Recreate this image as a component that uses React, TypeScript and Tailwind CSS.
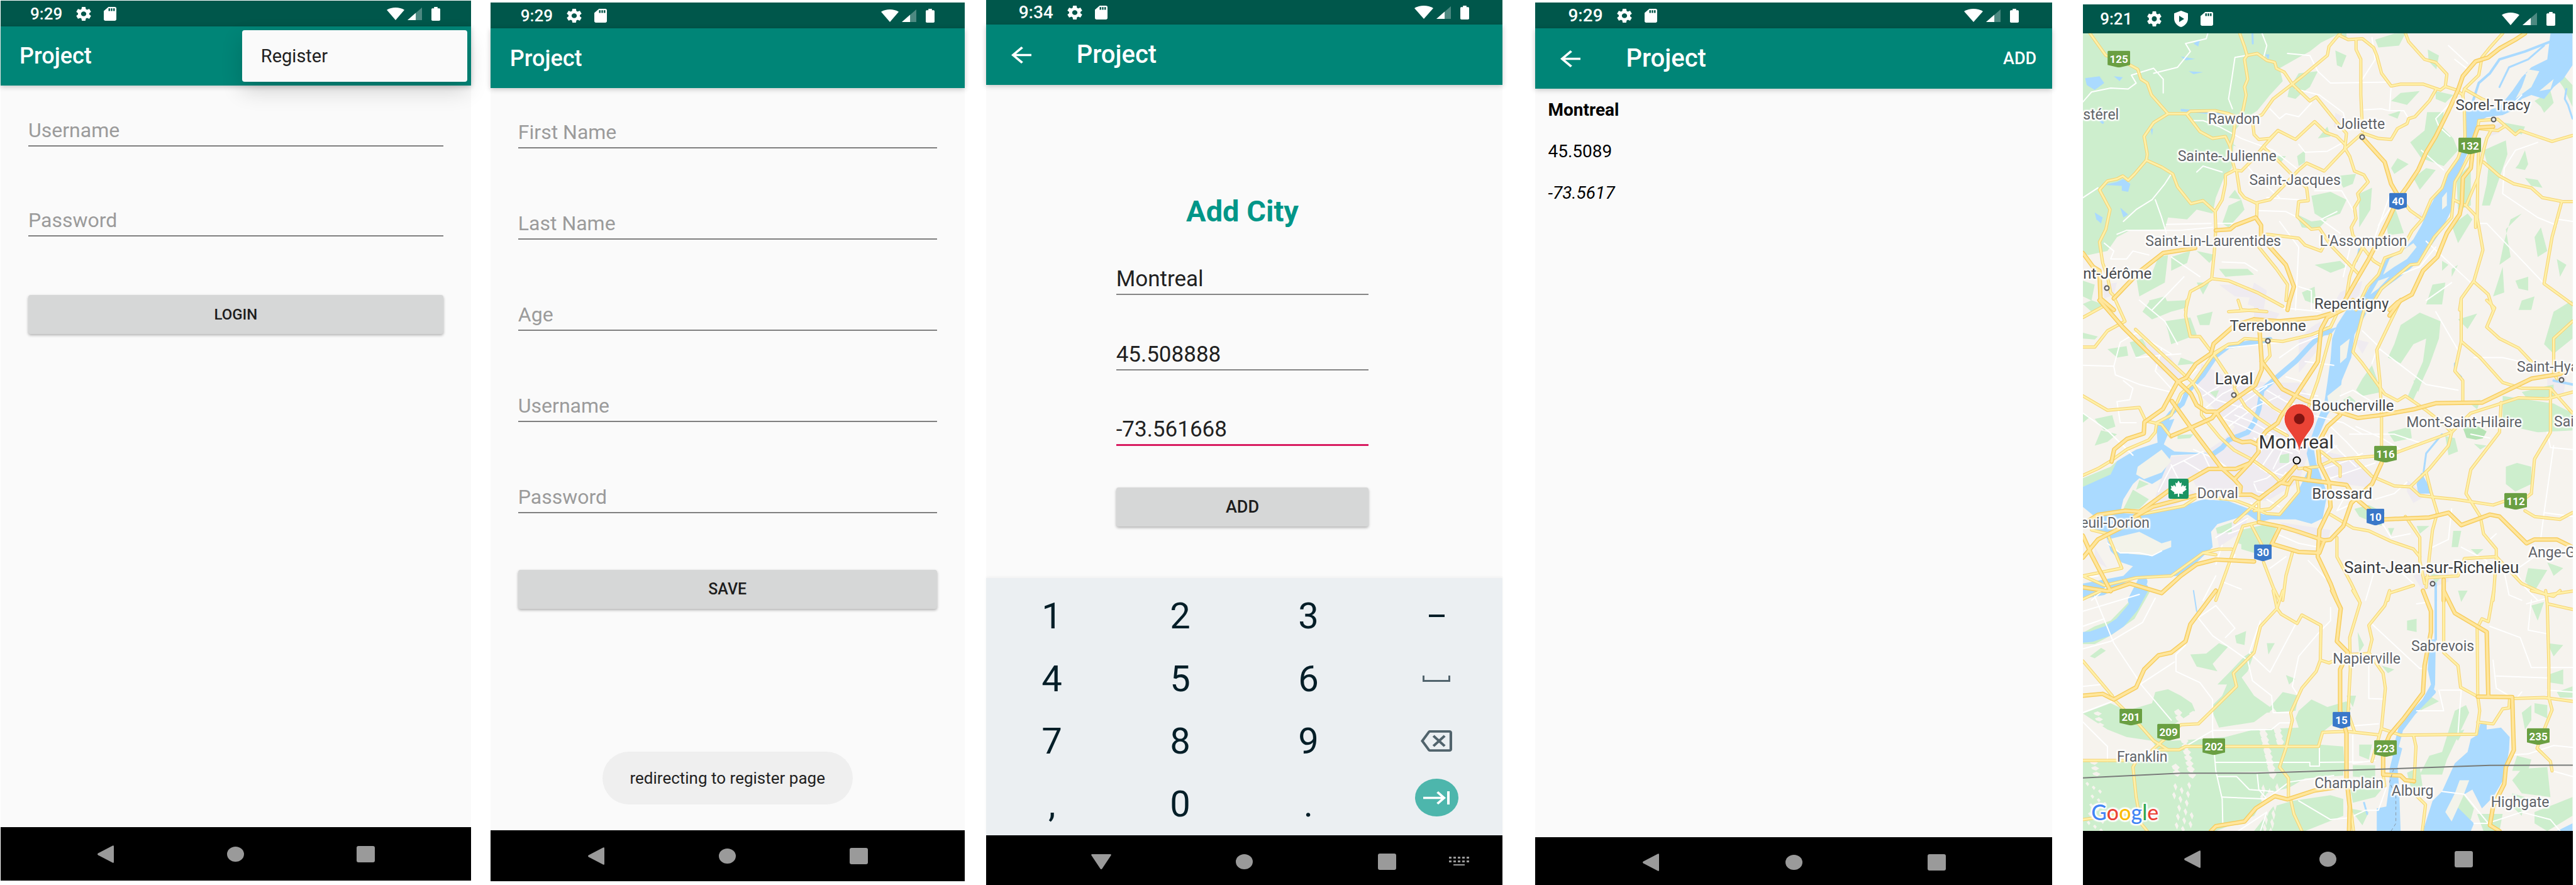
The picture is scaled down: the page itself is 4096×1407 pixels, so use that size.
import type { ReactNode } from "react";

/* ---------- icons ---------- */

type IconProps = { box: string; className: string; children: ReactNode };

function Icon({ box, className, children }: IconProps) {
  return (
    <svg viewBox={box} preserveAspectRatio="none" fill="currentColor" aria-hidden="true" className={className}>
      {children}
    </svg>
  );
}

function Gear({ className }: { className: string }) {
  return (
    <Icon box="2 2 20 20" className={className}>
      <path d="M19.43 12.98c.04-.32.07-.64.07-.98s-.03-.66-.07-.98l2.11-1.65c.19-.15.24-.42.12-.64l-2-3.46c-.12-.22-.39-.3-.61-.22l-2.49 1c-.52-.4-1.08-.73-1.69-.98l-.38-2.65C14.46 2.18 14.25 2 14 2h-4c-.25 0-.46.18-.49.42l-.38 2.65c-.61.25-1.17.59-1.69.98l-2.49-1c-.23-.09-.49 0-.61.22l-2 3.46c-.13.22-.07.49.12.64l2.11 1.65c-.04.32-.07.65-.07.98s.03.66.07.98l-2.11 1.65c-.19.15-.24.42-.12.64l2 3.46c.12.22.39.3.61.22l2.49-1c.52.4 1.08.73 1.69.98l.38 2.65c.03.24.24.42.49.42h4c.25 0 .46-.18.49-.42l.38-2.65c.61-.25 1.17-.59 1.69-.98l2.49 1c.23.09.49 0 .61-.22l2-3.46c.12-.22.07-.49-.12-.64l-2.11-1.65zM12 15.5c-1.93 0-3.5-1.57-3.5-3.5s1.57-3.5 3.5-3.5 3.5 1.57 3.5 3.5-1.57 3.5-3.5 3.5z" />
    </Icon>
  );
}

function SdCard({ className }: { className: string }) {
  return (
    <Icon box="4 2 16 20" className={className}>
      <path d="M18 2h-8L4.02 8 4 20c0 1.1.9 2 2 2h12c1.1 0 2-.9 2-2V4c0-1.1-.9-2-2-2zm-6 6h-2V4h2v4zm3 0h-2V4h2v4zm3 0h-2V4h2v4z" />
    </Icon>
  );
}

function PlayShield() {
  return (
    <Icon box="0 0 22 26" className="h-[26px] w-[22px]">
      <path
        fillRule="evenodd"
        d="M11 0 0 4.200v8c0 6.500 4.500 11.800 11 13.800 6.500-2 11-7.300 11-13.800v-8zM8 8l8 5-8 5z"
      />
    </Icon>
  );
}

function Wifi({ className }: { className: string }) {
  return (
    <Icon box="0 0 28 20" className={className}>
      <path d="M14 20 0 3.800C4 1.200 9 0 14 0s10 1.200 14 3.800z" />
    </Icon>
  );
}

function Signal({ className }: { className: string }) {
  return (
    <Icon box="0 0 22 20" className={className}>
      <path d="M22 0v20H0z" opacity="0.3" />
      <path d="M12.500 8.600V20H0z" />
    </Icon>
  );
}

function Battery({ className }: { className: string }) {
  return (
    <Icon box="7 2 10 20" className={className}>
      <path d="M15.67 4H14V2h-4v2H8.33C7.6 4 7 4.6 7 5.33v15.33C7 21.4 7.6 22 8.33 22h7.33c.74 0 1.34-.6 1.34-1.33V5.33C17 4.6 16.4 4 15.67 4z" />
    </Icon>
  );
}

/* ---------- shared phone parts ---------- */

type StatusProps = { time: string; large?: boolean; tight?: boolean; className: string };

function StatusBar({ time, large, tight, className }: StatusProps) {
  return (
    <div className={`flex shrink-0 items-center bg-[#00574b] font-medium text-white ${className}`}>
      <span className={large ? "text-[28px] leading-none" : "text-[26px] leading-none"}>{time}</span>
      <Gear className={tight ? "ml-6 h-6 w-[23px]" : "ml-[22px] h-[22px] w-6"} />
      {tight && (
        <span className="ml-5">
          <PlayShield />
        </span>
      )}
      <SdCard className="ml-5 h-[22px] w-5" />
      <Wifi className={large ? "ml-auto h-[21px] w-[30px]" : "ml-auto h-5 w-7"} />
      <Signal className="ml-[5px] h-5 w-[23px]" />
      <Battery className="ml-[15px] h-[22px] w-[14px]" />
    </div>
  );
}

function NavBar({ down, className, children }: { down?: boolean; className: string; children?: ReactNode }) {
  return (
    <nav className={`relative shrink-0 bg-black text-[#9a9a9a] ${className}`}>
      <div className="mx-auto grid h-full w-[83%] grid-cols-3 place-items-center">
        <button type="button" aria-label={down ? "Hide keyboard" : "Back"}>
          {down ? (
            <Icon box="0 0 32 24" className="h-6 w-8">
              <path d="M1.500 0h29q2 0 1 2L17.500 23q-1.500 2-3 0L.5 2q-1-2 1-2z" />
            </Icon>
          ) : (
            <Icon box="0 0 26 28" className="h-7 w-[26px]">
              <path d="M26 1.500v25q0 2-2 1L1 15.500q-2-1.500 0-3L24 .5q2-1 2 1z" />
            </Icon>
          )}
        </button>
        <button type="button" aria-label="Home" className="h-6 w-[27px] rounded-[50%] bg-[#9a9a9a]" />
        <button type="button" aria-label="Recent apps" className="h-[26px] w-[29px] rounded-[3px] bg-[#9a9a9a]" />
      </div>
      {children}
    </nav>
  );
}

const barClass =
  "relative flex shrink-0 items-center bg-[#008577] text-white shadow-[0_2px_8px_rgba(0,0,0,0.22)]";
const buttonClass =
  "h-[62px] w-full shrink-0 rounded-[4px] bg-[#d6d7d7] font-medium text-[#1d1d1d] shadow-[0_2px_4px_rgba(0,0,0,0.3)]";

function BackArrow() {
  return (
    <button type="button" aria-label="Navigate up">
      <Icon box="4 4 16 16" className="h-[27px] w-8">
        <path d="M20 11H7.830l5.590-5.590L12 4l-8 8 8 8 1.410-1.410L7.830 13H20v-2z" />
      </Icon>
    </button>
  );
}

function HintField({ name, password }: { name: string; password?: boolean }) {
  return (
    <label className="block">
      <span className="sr-only">{name}</span>
      <input
        type={password ? "password" : "text"}
        placeholder={name}
        className="block h-[50px] w-full border-b-2 border-[#7f7f7f] bg-transparent text-[32px] leading-[48px] text-[#212121] outline-none placeholder:text-[#9b9b9b] placeholder:opacity-100"
      />
    </label>
  );
}

/* ---------- screens ---------- */

function LoginScreen() {
  return (
    <section className="mt-px mb-[7px] ml-px flex basis-0 grow-[748] flex-col bg-[#fafafa]">
      <StatusBar time="9:29" className="h-[41px] pr-[49px] pl-[47px]" />
      <header className={`${barClass} h-[94px] pl-[30px]`}>
        <h1 className="text-[36px] leading-none font-medium">Project</h1>
        <div className="absolute top-[6px] right-[6px] flex h-[82px] w-[358px] items-center rounded-[4px] bg-[#fafafa] pl-[30px] shadow-[0_14px_34px_rgba(0,0,0,0.16)]">
          <button type="button" className="text-[29px] leading-10 text-[#212121]">
            Register
          </button>
        </div>
      </header>
      <form className="flex flex-1 flex-col gap-[93px] px-11 pt-[47px]">
        <HintField name="Username" />
        <HintField name="Password" password />
        <button type="button" className={`${buttonClass} text-[24px]`}>
          LOGIN
        </button>
      </form>
      <NavBar className="h-[85px]" />
    </section>
  );
}

function RegisterScreen() {
  return (
    <section className="mt-1 mb-[6px] ml-[31px] flex basis-0 grow-[754] flex-col bg-[#fafafa]">
      <StatusBar time="9:29" className="h-[41px] pr-12 pl-12" />
      <header className={`${barClass} h-[95px] pl-[31px]`}>
        <h1 className="text-[36px] leading-none font-medium">Project</h1>
      </header>
      <form className="flex flex-1 flex-col px-11 pt-[46px]">
        <div className="flex flex-col gap-[95px]">
          <HintField name="First Name" />
          <HintField name="Last Name" />
          <HintField name="Age" />
          <HintField name="Username" />
          <HintField name="Password" password />
        </div>
        <button type="button" className={`${buttonClass} mt-[90px] text-[25px]`}>
          SAVE
        </button>
        <p
          role="status"
          className="mx-auto mt-auto mb-[41px] flex h-[84px] w-[398px] items-center justify-center rounded-full bg-[#efefef] text-[26px] text-[#212121]"
        >
          redirecting to register page
        </p>
      </form>
      <NavBar className="h-[81px]" />
    </section>
  );
}

const cityFields = [
  { label: "City name", value: "Montreal", active: false },
  { label: "Latitude", value: "45.508888", active: false },
  { label: "Longitude", value: "-73.561668", active: true },
];

const keyClass = "flex items-center justify-center text-[58px] leading-none text-[#041e28]";

function Keypad() {
  const key = (k: string) => (
    <button key={k} type="button" className={keyClass}>
      {k}
    </button>
  );
  return (
    <div className="grid h-[409px] shrink-0 grid-cols-4 grid-rows-4 bg-[#ebeff2] px-[3px] pt-[10px] shadow-[0_-2px_4px_rgba(0,0,0,0.04)]">
      {["1", "2", "3"].map(key)}
      <button type="button" aria-label="Minus" className={keyClass}>
        <span className="h-1 w-[25px] bg-[#041e28]" />
      </button>
      {["4", "5", "6"].map(key)}
      <button type="button" aria-label="Space" className="flex items-center justify-center text-[#51636c]">
        <svg viewBox="0 0 44 10" className="h-[10px] w-11" fill="none" stroke="currentColor" strokeWidth="3" aria-hidden="true">
          <path d="M1.500 0v8.500h41V0" />
        </svg>
      </button>
      {["7", "8", "9"].map(key)}
      <button type="button" aria-label="Backspace" className="flex items-center justify-center text-[#51636c]">
        <Icon box="0 3 24 18" className="h-[34px] w-[50px]">
          <path d="M22 3H7c-.69 0-1.23.35-1.59.88L0 12l5.410 8.110c.36.53.9.89 1.590.89h15c1.100 0 2-.9 2-2V5c0-1.100-.9-2-2-2zm0 16H7.070L2.400 12l4.660-7H22v14zm-11.590-2L14 13.410 17.590 17 19 15.590 15.410 12 19 8.410 17.590 7 14 10.590 10.410 7 9 8.410 12.590 12 9 15.590z" />
        </Icon>
      </button>
      {[",", "0", "."].map(key)}
      <button type="button" aria-label="Next" className="flex items-start justify-center pt-[10px] text-white">
        <span className="flex h-[60px] w-[69px] items-center justify-center rounded-[50%] bg-[#4db6ac]">
          <Icon box="1 6 21 12" className="h-[21px] w-[42px]">
            <path d="M11.590 7.410L15.170 11H1v2h14.170l-3.590 3.590L13 18l6-6-6-6-1.410 1.410zM20 6v12h2V6h-2z" />
          </Icon>
        </span>
      </button>
    </div>
  );
}

function AddCityScreen() {
  return (
    <section className="ml-[34px] flex basis-0 grow-[822] flex-col bg-[#fafafa]">
      <StatusBar time="9:34" large className="h-[39px] pr-[53px] pl-[52px]" />
      <header className={`${barClass} h-24 gap-[72px] pl-10`}>
        <BackArrow />
        <h1 className="text-[40px] leading-none font-medium">Project</h1>
      </header>
      <form className="mr-[213px] ml-[207px] flex flex-1 flex-col pt-[173px]">
        <h2 className="text-center text-[47px] leading-[56px] font-bold text-[#009688]">Add City</h2>
        <div className="mt-[55px] flex flex-col gap-[70px]">
          {cityFields.map((f) => (
            <label key={f.label} className="block">
              <span className="sr-only">{f.label}</span>
              <input
                type="text"
                defaultValue={f.value}
                className={`block h-[50px] w-full bg-transparent text-[35px] leading-[47px] text-[#212121] outline-none ${
                  f.active ? "border-b-[3px] border-[#d81b60]" : "border-b-2 border-[#858585]"
                }`}
              />
            </label>
          ))}
        </div>
        <button type="button" className={`${buttonClass} mt-[66px] text-[27px]`}>
          ADD
        </button>
      </form>
      <Keypad />
      <NavBar down className="h-[79px] pt-1">
        <button type="button" aria-label="Change keyboard" className="absolute top-[34px] right-[53px]">
          <Icon box="0 0 32 14" className="h-[14px] w-8">
            <path d="M0 0h4v3H0zM7 0h4v3H7zM14 0h4v3h-4zM21 0h4v3h-4zM28 0h4v3h-4zM0 6h4v3H0zM7 6h4v3H7zM14 6h4v3h-4zM21 6h4v3h-4zM28 6h4v3h-4zM7 12h18v2H7z" />
          </Icon>
        </button>
      </NavBar>
    </section>
  );
}

function CityListScreen() {
  return (
    <section className="mt-1 ml-[52px] flex basis-0 grow-[822] flex-col bg-[#fafafa]">
      <StatusBar time="9:29" large className="h-[41px] pr-[53px] pl-[52px]" />
      <header className={`${barClass} h-24 gap-[72px] pr-[25px] pl-10`}>
        <BackArrow />
        <h1 className="text-[40px] leading-none font-medium">Project</h1>
        <button type="button" className="ml-auto text-[27px] leading-none font-medium">
          ADD
        </button>
      </header>
      <ul className="flex-1 pt-px pl-5 text-[28px] leading-[66px] text-black">
        <li className="font-bold">Montreal</li>
        <li>45.5089</li>
        <li className="italic">-73.5617</li>
      </ul>
      <NavBar className="h-[76px] pt-1" />
    </section>
  );
}

/* ---------- map ---------- */

type Sheet = {
  transform: string;
  green: string[];
  urban: string[];
  water: string[];
  streams: [string, number][];
  islands: string[];
  local: string[];
  roads: string[];
  highways: string[];
};

const north: Sheet = {
  transform: "matrix(0.5069 0 0 0.3141 -11.7 -52.8)",
  green: [
    "23,168 830,168 795,195 770,215 735,260 700,290 640,345 650,410 610,480 570,560 530,600 500,660 495,740 490,850 465,900 440,1000 430,1080 380,1060 350,1110 290,1100 280,1160 170,1165 130,1200 100,1270 40,1290 23,1280",
    "940,200 1000,170 1035,168 1015,230 950,240", "1105,250 1140,280 1132,350 1108,310", "815,255 850,280 835,340 820,330", "700,370 760,360 735,440 710,470 690,500 665,490 670,450",
    "1103,567 1155,567 1150,640 1185,700 1200,760 1155,840 1085,800 1050,720 1095,660", "990,510 1020,470 1080,460 1040,530", "980,580 1020,560 1010,600", "1130,460 1185,480 1160,520 1130,500",
    "1060,900 1100,850 1130,860 1080,960", "1010,800 1045,830 1000,880 990,850", "740,990 800,970 850,1010 830,1080 780,1110 750,1080", "820,890 880,880 870,930 840,950", "690,1080 740,1120 790,1110 760,1160 710,1150",
    "1000,1040 1030,1180 980,1190 975,1120", "1280,760 1350,710 1355,780 1330,900 1300,1040 1275,1040 1290,930 1295,850", "1195,900 1240,830 1240,1040 1200,1060", "1345,620 1410,640 1400,680 1360,660", "1390,830 1410,760 1420,830 1410,860 1380,850",
    "1410,900 1450,910 1465,950 1430,940", "1365,1110 1400,1080 1350,1160 1365,1300 1330,1340 1345,1220", "1340,1350 1345,1480 1310,1500 1330,1400", "1180,1140 1230,1080 1245,1110 1200,1230", "890,980 930,950 925,1060 890,1150 890,1060",
    "1490,350 1530,380 1559,430 1559,540 1530,440", "1440,510 1490,460 1500,520 1470,570 1460,540", "480,1040 520,1010 530,1060 480,1150 460,1130", "500,960 520,1010 480,1000", "300,1300 360,1270 350,1330 300,1370",
    "190,1400 240,1380 260,1300 290,1290 280,1430 200,1500", "23,1420 60,1440 50,1520 23,1500", "380,1270 440,1290 420,1330", "450,1360 540,1360 560,1390 470,1400", "380,1430 420,1430 400,1490", "230,1520 280,1500 300,1568 240,1568",
    "750,1340 830,1320 850,1350 800,1380", "710,1480 750,1450 755,1540 720,1520", "1100,1540 1120,1440 1160,1430 1150,1540", "1440,1200 1460,1150 1480,1270 1450,1300", "1510,1310 1540,1340 1520,1400", "1380,1420 1420,1400 1420,1470 1390,1460",
    "1400,1520 1440,1500 1430,1568 1390,1568", "1180,1360 1200,1340 1180,1400", "820,170 850,168 850,190", "480,730 470,700 505,740", "760,700 790,640 800,690", "695,790 720,760 720,820 700,840", "630,790 660,790 640,830", "1150,1320 1170,1340 1150,1370",
  ],
  urban: ["815,570 850,600 840,660 810,640", "1300,640 1335,620 1330,670 1300,690", "830,1480 900,1420 890,1490 850,1568 800,1568", "85,1440 130,1430 120,1490 90,1510", "450,1440 520,1440 600,1510 500,1500", "560,1430 600,1470 590,1568 540,1540", "1060,1110 1085,1070 1090,1100"],
  water: [
    "1490,168 1559,168 1559,330 1530,400 1500,440 1470,500 1430,480 1400,500 1370,560 1340,582 1290,592 1260,620 1250,680 1238,740 1215,830 1195,900 1185,970 1180,1060 1150,1160 1125,1220 1095,1290 1050,1360 1010,1410 975,1450 940,1500 920,1568 880,1568 905,1500 930,1430 960,1350 980,1300 1020,1280 1060,1210 1085,1140 1110,1050 1130,990 1160,900 1190,820 1215,730 1225,640 1225,550 1290,560 1330,540 1370,460 1400,390 1430,340 1480,300",
    "30,395 75,385 90,420 60,455 35,430", "330,285 375,298 345,305", "370,220 390,200 385,235", "595,275 608,275 605,300", "355,360 400,365 370,375", "90,935 130,920 150,905 172,930 165,970 145,965 145,940", "60,1075 85,1100 80,1130 65,1110", "140,1050 165,1085 150,1100", "120,385 148,390 138,410", "235,650 243,650 240,685", "330,550 470,570 470,585 330,562",
  ],
  streams: [["1490,210 1410,260 1330,300 1300,370 1265,420 1245,520 1235,570", 4], ["1470,230 1420,300 1360,340 1330,440", 3], ["1559,600 1545,530 1535,500 1540,450", 3], ["555,168 556,220", 3], ["890,1260 882,1320", 3], ["23,600 60,580 85,620", 4]],
  islands: ["1400,440 1420,350 1455,360 1430,440 1380,500", "1150,1000 1165,970 1165,1040 1150,1060", "985,1310 1060,1230 1070,1250 1040,1310 1000,1350 965,1390", "1455,460 1500,400 1490,450", "950,1420 985,1400 950,1460 925,1490", "1410,370 1435,370 1420,395"],
  local: [
    "23,515 50,465 110,445 165,450 190,420 175,380 245,345 275,400 275,470", "415,168 410,195 345,220 360,260 320,340 245,370", "585,168 600,230 590,290", "535,280 500,290 490,400 480,500 492,550", "665,270 735,280 760,360 800,420 985,415", "990,435 985,560", "905,555 960,550 985,560 1030,560 1045,600",
    "690,450 765,480 840,570 850,640", "610,550 640,600 660,575 700,590 740,520", "700,730 720,770 790,765 840,720", "750,965 835,965 870,1060", "570,1065 660,1070 690,1095", "285,1135 425,1130", "440,1130 520,1130", "130,1185 160,1165 330,1165 430,1150", "250,1010 270,1100 285,1180", "150,1120 190,1060 240,1010 280,930 300,880",
    "23,1000 70,950", "300,1300 390,1400", "460,1325 530,1330 570,1370", "1265,1130 1290,1130 1470,1435", "1450,720 1380,760 1345,850 1340,980 1450,1100 1510,1140", "990,970 930,1240", "1010,1000 950,1140", "840,1400 870,1190 830,1250", "1100,1220 1240,1430", "1130,1250 1080,1350 1000,1400", "1180,1430 1100,1520",
    "1085,760 1155,860", "1175,690 1140,640 1130,600 1200,480", "360,610 400,610 450,640 520,700 620,760 700,860", "380,870 400,840 460,870", "600,1000 700,1010", "640,1120 700,1250 690,1568", "90,1230 120,1270 110,1310 160,1310 180,1270 230,1290", "340,1400 240,1568", "1559,1120 1515,1110", "1190,300 1230,350", "930,190 940,300 900,400", "1170,230 1230,320",
    "540,840 570,900 640,1000", "1400,480 1350,560", "820,1070 770,1110 830,1180", "700,1450 740,1470 740,1568",
  ],
  roads: [
    "45,168 95,280 150,310 195,350 205,400 225,420 238,480 290,575 245,620 215,690 225,780 222,810 185,880 165,912 148,890 130,905 100,915 75,960 108,1060 95,1160 75,1225 85,1330 100,1400 110,1480 125,1505",
    "222,810 270,845 305,880 320,945 362,1030 400,1015 438,1070", "290,575 350,575 360,562 440,560 480,575 520,600", "350,580 390,665 430,700 470,690 485,740 490,800 500,860 520,865 560,800 590,740 635,660 690,705 750,615 785,670 820,690 845,730",
    "515,168 530,235 538,280 530,300 540,400 530,440 535,480 525,560 500,620 495,690 485,740", "538,280 570,270 600,305 625,315 630,345 655,365 680,425 735,510 755,490 790,560 820,620 850,675 845,750", "830,168 795,235 790,280 715,380 680,425 620,500 585,580 540,610 500,600",
    "830,180 855,200 900,195 935,240 945,280 960,370 990,435 1020,425 1090,425 1145,455 1160,437 1195,455 1215,480 1220,560 1222,690 1200,800 1165,880 1150,950 1115,1010 1090,1105 1055,1170 1020,1275 970,1305 950,1390 915,1450 880,1568", "880,200 880,250 895,300 895,480 900,660",
    "1035,168 1045,210 1095,300 1130,315 1165,375 1160,437", "1340,168 1300,240 1275,290 1265,380 1220,450 1215,480", "1220,450 1275,500 1290,510", "1130,455 1110,510 1065,590 1045,600 1040,625 1010,650 990,705 950,700 905,675", "555,610 560,680 575,705 610,700 635,660",
    "895,680 850,745 780,865 725,825 700,860 650,945 610,1010 570,1025 568,1100", "590,745 640,820 680,885 725,950 730,1015 700,1020 695,1095 740,1160 765,1155 800,1240 890,1390", "500,860 470,885 470,930 460,1010 438,1070 440,1160 435,1280 427,1410 480,1420 570,1480 650,1550", "505,865 515,970 530,1000 570,1030",
    "845,750 860,790 875,865 905,885 918,920 885,980 890,1010 875,1050 880,1105 865,1150 870,1190 905,1260 935,1320 955,1340", "600,1185 650,1195 700,1205 720,1240 770,1270 780,1240", "427,1410 400,1440 360,1475 345,1568", "575,1250 630,1360 665,1440 660,1520", "1010,985 1050,1065 1085,1105",
    "1345,640 1325,660 1262,650 1265,610 1325,603 1380,680 1395,660 1495,715 1559,685", "1310,640 1290,700 1280,760 1262,900 1260,1100 1278,1265 1250,1420 1210,1510 1205,1568", "1265,740 1262,900 1225,1040 1185,1010", "1280,820 1330,890 1375,930 1430,950 1465,1000 1530,1020 1559,1020", "1525,1022 1495,1200 1470,1435 1559,1540",
    "1240,770 1205,880 1190,920 1185,1010 1180,1100 1125,1200 1075,1335 1050,1340 960,1460 930,1540 915,1568", "1225,1040 1255,1090 1255,1150", "1250,1425 1295,1490 1310,1568", "905,1240 875,1330 860,1400 850,1500",
  ],
  highways: [
    "1410,168 1380,200 1330,245 1295,290 1255,310 1215,385 1200,455 1170,560 1130,690 1100,770 1075,860 1040,945 1010,1010 985,1100 955,1200 920,1310 880,1420 845,1520 820,1568", "1310,640 1262,645 1250,700 1240,850 1215,900 1212,1030 1205,1085 1165,1180 1135,1300 1090,1370 1055,1490 1010,1530 985,1568",
    "898,692 970,820 990,930 1010,985", "440,1165 485,1160 500,1140 565,1100 582,1140 582,1190 610,1250 660,1340 685,1450 670,1530 665,1568", "23,1280 55,1350 75,1370 78,1510 120,1568", "120,1510 200,1375 275,1280 375,1255",
  ],
};

const centre: Sheet = {
  transform: "matrix(0.5069 0 0 0.3043 -11.7 424.3)",
  green: [
    "230,10 350,0 345,40 300,60 240,100 210,60", "280,110 360,90 380,180 300,230 290,160", "23,170 70,190 60,205 23,200", "100,255 160,240 165,290 130,300", "170,220 210,200 230,270 190,300", "60,620 115,600 125,660 90,680", "80,680 130,700 100,740 60,760", "23,590 45,610 23,640",
    "23,930 110,870 130,840 120,900 60,960 23,975", "180,990 230,1040 200,1090 150,1090", "200,940 230,960 190,990", "1020,130 1080,65 1145,110 1140,200 1110,340 1060,520 1040,510 1090,320 1100,200 1060,230 1020,330 980,300 1000,230", "1060,420 1090,410 1075,480", "1340,500 1500,540 1559,590 1559,680 1450,690 1340,650",
    "900,410 930,340 960,480 900,500 880,470", "980,690 1050,660 1055,720 1000,740", "1350,870 1385,850 1430,870 1430,960 1380,1000 1350,960", "1160,710 1190,720 1200,790 1170,810", "520,1200 600,1170 630,1190 610,1290 550,1290 510,1270", "520,1240 580,1280 560,1320 520,1300", "440,1190 490,1160 490,1210 445,1220", "875,1090 920,1070 970,1110 960,1180 890,1130",
    "1185,1205 1210,1205 1200,1290 1180,1290", "1240,1300 1280,1300 1260,1330", "1070,1180 1110,1180 1080,1220", "135,1250 200,1240 190,1290 140,1300", "380,80 430,60 420,130 390,130", "1470,230 1500,60 1559,0 1559,200 1500,280", "1400,480 1500,440 1500,500 1420,520", "1200,100 1260,70 1230,150", "1110,1420 1150,1440 1130,1480",
    "320,705 370,700 360,720 320,725", "420,480 450,470 440,510", "640,810 670,800 670,850 640,850", "1420,1400 1480,1410 1440,1520 1410,1470", "1480,1370 1530,1400 1500,1440", "330,300 380,330 320,340", "840,520 860,500 880,530 850,560", "450,1040 490,1060 460,1080", "1230,530 1270,520 1260,570", "1250,750 1290,760 1270,780", "1340,1050 1380,1070 1350,1090", "23,20 50,0 100,30 50,60", "980,1190 1000,1190 990,1230",
  ],
  urban: [
    "395,330 470,400 600,430 700,430 760,560 735,780 700,950 600,1050 500,1030 420,1040 380,980 350,870 400,800 470,720 500,660 450,590 380,480", "290,820 400,800 430,870 350,960 250,1030", "200,200 300,300 340,420 260,360", "760,780 860,820 930,900 930,980 840,960 780,900", "560,30 640,70 620,120 560,100", "1040,940 1100,1020 1060,1060 1040,1000", "700,210 740,140 770,110 760,260 700,380",
    "1060,1440 1120,1380 1170,1400 1170,1470 1090,1520", "1480,380 1540,400 1530,500 1480,470", "870,200 920,220 900,280", "230,1110 300,1080 380,1010 330,960 240,1040", "440,1190 540,1130 530,1200 450,1290", "640,1160 800,1200 790,1260 700,1230", "60,1290 100,1400 60,1360",
  ],
  water: [
    "870,0 935,0 905,90 875,180 865,300 835,420 830,500 790,600 765,700 745,750 755,850 770,920 790,1010 775,1140 740,1168 690,1145 610,1145 575,1160 540,1120 445,1170 425,1210 430,1290 380,1370 330,1440 180,1450 90,1540 23,1560 23,1480 150,1440 180,1390 145,1370 110,1310 95,1230 50,1200 60,1130 130,1110 200,1120 330,1080 400,1040 480,1050 590,1120 640,1115 700,990 720,920 735,870 725,800 735,740 755,640 780,540 790,430 800,310 805,200 820,130 835,90",
    "23,975 110,910 130,840 190,780 265,740 310,790 420,800 300,810 270,930 240,960 200,930 180,960 150,1040 140,1110 60,1130 23,1080", "255,640 310,620 270,780 265,730", "1085,900 1105,960 1115,1010 1075,1010 1070,960", "780,160 820,140 800,180 760,190",
  ],
  streams: [["430,805 460,770 480,730 540,690 560,640 575,570 585,470 640,390 690,320 740,230 790,150", 8], ["265,740 262,670 300,590 335,540 350,480 400,390 440,290 480,240 560,220 610,205", 8], ["1130,1568 1130,1480", 4], ["1090,920 1100,800 1150,700", 3], ["1190,330 1190,370 1210,400", 3], ["210,1470 180,1568", 16], ["1559,440 1500,420", 4]],
  islands: ["195,870 270,780 300,840 270,900 215,935 190,910", "100,1250 200,1210 270,1270 300,1255 300,1290 270,1310 240,1335 170,1325 120,1310", "830,240 860,200 850,300 830,330", "790,500 835,440 830,510 795,560"],
  local: [
    "23,340 120,345 125,390 200,440 300,480", "120,345 140,220 190,170 300,280", "190,300 330,280", "200,0 280,110 320,230", "150,420 180,460 170,520 130,530 140,640 190,640", "23,590 100,680 180,810", "650,40 770,60", "470,250 640,220 760,180", "400,500 440,460 500,400 560,370",
    "410,560 460,490 520,440", "470,560 520,500 620,430", "430,600 500,640 580,700", "460,620 540,520 600,450", "480,660 560,560 640,500", "500,600 560,640 620,700", "520,560 600,640 660,690", "580,520 640,590 680,620", "600,470 660,530 700,550", "560,720 600,760 680,800", "600,700 650,730 700,790",
    "590,760 560,850 600,900", "620,780 580,880 660,920", "650,780 620,880", "560,950 600,930 640,880 690,830", "560,960 570,1000 610,1010 660,900", "550,1060 600,1110", "600,1040 640,1080", "370,780 440,830 480,880", "340,840 400,900", "400,800 420,870", "300,860 330,960", "260,1000 300,870 400,790",
    "780,700 830,790 880,870", "800,660 850,740 900,830", "780,880 850,840 900,800", "800,930 870,890 940,850", "820,760 760,830", "880,660 960,720 1020,780", "740,600 840,640 900,700", "830,500 870,470 920,520 960,560", "860,700 1000,700 1090,750", "940,1040 1000,1010 1040,950", "850,1010 820,1100 900,1040",
    "460,1280 440,1380", "440,1240 540,1140", "480,1220 530,1190", "630,1220 700,1270 760,1290", "660,1340 610,1400", "730,1360 800,1480", "500,1330 460,1470 520,1510", "900,160 950,240 930,330", "950,250 1100,440 1200,470", "1130,60 1200,260", "1250,300 1340,300 1420,330", "1480,690 1490,770 1559,780",
    "1500,760 1470,1110", "1559,1130 1470,1110 1460,1240", "1240,700 1300,720", "960,1160 990,1240 1050,1220", "1180,1090 1170,1250 1120,1290", "1210,1290 1290,1360 1280,1420", "1300,1250 1320,1220", "1440,1340 1380,1410 1410,1500 1450,1568", "1000,1390 1060,1480", "940,1400 910,1568", "1340,1380 1360,1540 1400,1568",
    "50,1568 110,1480", "23,1450 70,1440", "400,1568 440,1440", "100,1270 140,1320 200,1320 240,1335 270,1310", "270,250 250,370 310,480", "380,360 330,440", "370,430 440,520 520,560", "640,300 700,230 760,190", "660,400 720,430", "720,320 810,340", "690,480 760,500",
  ],
  roads: [
    "188,152 367,430 388,489 395,531 395,599 453,717 498,784 556,835 619,911 644,953", "498,460 533,557 574,616 619,666 664,708", "350,0 345,80 360,190 390,190 440,300 500,450", "430,280 480,230 510,225 530,200 580,205 650,215 740,180 800,140 820,70", "560,470 620,560 660,600", "605,210 610,290 585,340",
    "23,500 100,575 200,560 220,630 270,650 300,715", "23,915 70,880 110,840 160,780 230,730 250,690 255,640 300,600 330,490 370,430 430,290 480,230", "125,0 155,110 100,160 60,245 23,245", "23,90 100,20", "960,850 960,610", "800,835 935,815 1000,800 1180,690 1240,590 1390,510 1480,515 1559,480",
    "880,835 930,920 1000,970 1050,975 1080,1020 1130,1030 1190,1040 1310,1070 1345,1050", "1410,1100 1440,1130 1520,1145 1559,1110", "1050,975 1110,880 1170,760 1180,690 1150,640 1100,575 1035,500 1010,525 970,490 900,330 870,270 900,80 915,0", "1100,900 1115,1000 1135,1110 1120,1200 1110,1340 1100,1500", "1035,1130 1080,1240 1080,1360 1095,1480",
    "1210,0 1210,215 1190,370 1215,420 1215,540", "1210,215 1270,300 1340,430 1400,460 1490,460 1559,590", "1335,535 1330,690 1240,885 1225,1010 1270,1130 1280,1220 1320,1300 1320,1350 1310,1568", "1490,465 1490,690 1440,830 1430,1010", "1290,0 1315,40 1290,140 1330,200 1390,250 1430,320", "1559,110 1500,200 1500,380 1510,410",
    "800,1120 870,1190 920,1205 990,1260 1060,1300 1080,1340", "820,1240 820,1340 865,1480 890,1568", "575,1160 525,1180 500,1290 440,1568", "550,1170 585,1280", "590,1370 620,1500 640,1568", "680,1320 660,1440 650,1568", "575,1040 575,1160", "385,1020 500,1045 540,1070 600,1115 640,1120 700,1000 695,940", "200,1120 340,1075 380,1030",
    "560,1100 610,1090 660,1020 670,950", "800,180 780,300 760,420 730,560", "770,790 830,870 830,920", "700,880 760,870 800,840", "50,1200 100,1220 145,1400 23,1440", "23,1440 90,1490 190,1450 300,1440 400,1320 440,1330", "400,1320 450,1300 490,1300", "500,1160 620,980 690,870", "1060,1490 985,1530 980,1568", "1320,1340 1400,1480 1480,1540 1559,1520", "1020,0 945,260 955,420 960,600", "510,0 520,50 600,60", "480,60 570,50", "1100,1450 1200,1440 1220,1350 1320,1340", "1430,1010 1400,1050",
  ],
  highways: [
    "75,0 148,140 322,426 362,489 380,548 410,582 440,582 498,725 523,742 549,738 571,755", "302,527 362,666 458,877 498,936 518,974 516,1003", "560,100 500,130 433,228 425,278 377,333 347,405 320,426 274,569 216,637 214,696 161,725 121,780 113,843",
    "23,1170 70,1121 156,1100 201,1105 292,995 352,944 418,881 503,881 546,852 574,793 574,734 599,683 634,641 644,607 690,498 760,321 770,152 790,90 850,40 870,0", "186,1130 241,1079 377,1020", "503,1016 551,1016 576,1037 644,953 669,961 682,928 730,940 850,965 875,1030 925,1100",
    "576,130 584,321 584,363 564,443 513,502 440,590 428,616 362,666 302,708", "584,321 649,464 720,523 800,570 885,615 960,600 1060,570 1130,538 1275,535 1430,410 1520,385 1559,350", "830,600 790,660 760,750 765,850 795,950 800,1080 765,1200 760,1340 800,1480 820,1568", "498,936 546,852",
    "23,1500 100,1520 170,1480 270,1530 330,1440 380,1380 440,1355 560,1365", "620,1275 700,1315 765,1320 780,1255", "640,1190 615,1275", "575,1160 650,1185 700,1210 780,1255 800,1250 840,1180 865,1060 930,960 960,850", "970,1145 1110,1135 1170,1110 1210,1175 1300,1120 1330,1130 1415,1270 1440,1250 1510,1250 1559,1290",
    "23,1345 70,1250 200,1140", "23,1230 50,1330 110,1520", "720,880 735,890 730,940", "560,100 640,110 760,90 800,70", "690,870 650,950", "1155,1460 1155,1568", "1020,0 985,80",
  ],
};

const south: Sheet = {
  transform: "matrix(0.5069 0 0 0.2984 -11.7 886)",
  green: [
    "23,225 60,190 110,160 190,20 200,0 235,0 185,150 110,240 60,285 23,285",
    "23,655 110,600 160,640 240,600 250,540 290,525 330,560 365,600 375,640 320,700 260,760 300,800 400,790 470,780 560,740 700,730 690,680 700,640 740,580 790,620 850,590 865,630 800,720 770,760 765,820 840,830 845,955 440,970 330,975 23,1000 23,910 150,905 260,855 240,800 160,780 100,740",
    "23,1000 330,978 565,975 840,960 840,985 720,1000 670,1050 600,1080 560,1200 440,1281 23,1281", "680,1120 800,1090 840,1110 840,1200 720,1281 560,1281 620,1150", "430,610 460,560 480,480 520,460 560,560 610,620 650,540 700,560 690,640 600,650 560,700 450,730 430,650", "360,340 410,335 450,280 478,300 430,390 445,430 380,405",
    "500,240 535,215 530,290 505,280", "480,440 530,350 565,310 540,430 500,500 445,500", "600,280 625,280 605,340", "45,350 80,305 95,320 60,360", "1110,880 1150,860 1190,640 1225,610 1235,650 1165,900 1150,980 1080,980", "1170,1090 1200,1050 1250,1160 1240,1220 1190,1200", "1040,970 1080,940 1090,1060 1060,1100", "860,1040 960,1060 940,1100 870,1130",
    "1440,600 1480,610 1480,680 1440,650", "1400,650 1430,610 1430,690 1410,740", "1385,880 1430,900 1420,960 1370,960", "1400,950 1480,940 1490,1100 1400,1080 1370,1010", "1480,450 1530,420 1530,500 1490,490", "1510,540 1559,510 1559,570 1520,570", "1040,160 1070,150 1070,220 1040,210", "885,220 905,290 890,330", "1480,280 1530,290 1500,350",
    "1200,0 1230,0 1210,60", "1430,80 1470,60 1450,160", "660,450 690,470 670,500", "960,400 1000,420 980,440", "1090,600 1110,560 1140,590 1080,640", "890,820 930,820 920,900 890,880", "1370,1080 1410,1100 1400,1200 1370,1150", "1440,1180 1559,1100 1559,1200 1480,1281 1440,1240", "870,620 850,560 880,560",
    "1260,1190 1340,1190 1330,1281 1280,1281", "870,930 940,930 940,1000 870,990", "1180,760 1220,740 1200,800", "860,1160 920,1180 900,1250",
  ],
  urban: ["850,320 900,330 905,370 860,350"],
  water: [
    "1000,850 1012,830 1025,840 1010,940 1015,1050 1020,1281 945,1281 945,1160 975,1150 985,1030 985,950", "1240,790 1260,770 1270,710 1290,710 1290,740 1335,730 1362,780 1360,850 1345,1000 1310,1100 1275,1160 1245,1060 1215,1090 1190,1140 1250,1240 1240,1281 1090,1281 1120,1120 1150,1070 1190,920 1230,860",
    "1110,260 1130,260 1128,500 1120,560 1085,590 1115,500 1105,420", "1559,1240 1559,1281 1510,1281",
  ],
  streams: [["212,-10 180,90 140,170 100,215 50,245 15,250", 17], ["1130,0 1130,260", 4], ["1122,540 1060,650 1020,740 1000,870", 8], ["370,0 380,110", 2], ["905,1130 915,1190", 3]],
  islands: ["1205,1010 1235,1010 1215,1100 1180,1230 1160,1180 1190,1080"],
  local: [
    "385,145 430,240 540,370 555,480 615,560 620,650 680,650", "345,290 315,340 315,430 390,490 430,580 430,760 440,960 460,1110 462,1250", "440,915 735,915 735,935 765,935 765,840", "350,825 430,745 615,740 640,705 675,705", "60,30 120,280 210,510 300,690", "23,650 130,580 310,380", "580,160 545,330 610,435 690,180",
    "800,90 800,160 760,230 700,350 680,510 695,550", "920,400 920,575 970,578", "925,170 1080,415 1095,415", "1145,530 1210,530", "1320,455 1480,465", "1300,190 1395,250 1430,410 1559,410", "1415,70 1480,40", "765,915 900,912", "460,1100 600,1110 670,1020 810,985", "445,990 505,990 545,1060 620,1070",
    "700,1120 800,1220 860,1210 910,1170 950,1170 975,1050", "1150,1070 1220,1085 1300,1250", "1310,1230 1400,1180 1490,1220 1520,1281", "1370,875 1420,870 1500,825 1559,835", "1495,960 1559,990", "1070,640 1155,640 1140,530", "23,700 100,830 100,910", "23,310 110,270 210,170 250,40", "23,190 90,150", "23,510 80,500", "380,150 440,80 500,200 470,250",
    "1210,530 1200,760", "510,1281 600,1180 580,1281", "1430,50 1420,210 1480,230", "1310,370 1320,520 1380,580 1400,540", "570,980 575,1060 600,1110", "875,720 950,710", "870,770 870,920 940,905", "1250,1240 1300,1240", "23,110 200,20", "1070,70 1110,60", "1559,540 1480,530",
  ],
  roads: [
    "1155,0 1155,330 1200,400 1208,515 1262,565", "1375,575 1470,570 1559,590", "1262,565 1260,200 1275,150 1295,165 1312,0", "1262,565 1268,640 1258,765 1020,770 960,735", "1262,700 1310,710 1340,630 1360,625 1362,570", "985,0 970,80 920,185 930,260 920,330 965,440 972,520 960,730 930,910",
    "1060,770 1068,830 1062,1020", "1062,1080 1098,1140 1088,1281", "870,0 893,65 860,250 862,420 855,650 875,750", "950,768 850,750 775,755 762,830 345,830 325,848 265,848", "1475,0 1480,70 1485,400 1485,570 1495,635 1470,740 1448,840 1490,910 1495,960", "1480,70 1559,100", "1430,0 1500,30 1520,0",
    "620,0 632,95 645,125 695,175 710,130 770,185 768,370 795,385 855,340 920,335", "768,370 755,430 710,520 675,650 680,690 660,840 640,940 668,1000 668,1110", "650,0 632,95 580,190 560,330 495,440 505,510 385,710 330,715 240,850", "23,375 115,560 120,580 150,630 200,715 245,800 290,848", "23,905 150,905",
    "200,880 180,940 190,1100 205,1240 225,1281", "23,1220 190,1180", "675,1112 685,1190 710,1281", "965,980 970,1040", "855,1040 872,1281", "23,45 80,0",
  ],
  highways: [
    "805,0 832,95 820,270 855,330 830,420 830,640 850,760 850,1000 860,1150 858,1281", "1155,0 1190,120 1290,220 1295,560", "1262,565 1370,567 1375,850 1350,940 1345,1030 1310,1150 1300,1250 1330,1281", "1090,0 1115,110 1115,220 1095,400 1090,545 1030,680 985,770 965,850 965,980 1020,985 1035,1010 1062,1015",
    "440,0 360,180 345,270 300,330 260,345 215,420 190,515 120,580 85,550 23,560", "425,1281 440,1255 530,1230 565,1160 625,1095 665,1112 750,1065 850,1040",
  ],
};

/* Clearings inside the forests, spread by a fixed sequence. */
const clearings = Array.from({ length: 90 }, (_, i) => {
  const x = 4 + ((i * 137) % 410);
  const y = i % 2 ? 1072 + ((i * 89) % 105) : 1190 + ((i * 61) % 76);
  const w = 6 + ((i * 7) % 14);
  const h = 7 + ((i * 5) % 15);
  return `${x},${y + h / 3} ${x + w / 2},${y} ${x + w},${y + h / 2} ${x + w * 0.6},${y + h} ${x + 2},${y + h * 0.7}`;
});

const sheets = [north, centre, south];

function Lines({ lines, color, width }: { lines: string[]; color: string; width: number }) {
  return (
    <g fill="none" stroke={color} strokeWidth={width} strokeLinejoin="round" strokeLinecap="round">
      {lines.map((points) => (
        <polyline key={points} points={points} vectorEffect="non-scaling-stroke" />
      ))}
    </g>
  );
}

function Terrain() {
  return (
    <svg viewBox="0 0 779 1268" preserveAspectRatio="none" className="absolute inset-0 h-full w-full" aria-hidden="true">
      <rect width="779" height="1268" fill="#f6f3ee" />
      {sheets.map((s) => (
        <g key={s.transform} transform={s.transform}>
          {s.urban.map((p) => <polygon key={p} points={p} fill="#efebf0" />)}
          {s.green.map((p) => <polygon key={p} points={p} fill="#cdeecd" />)}
        </g>
      ))}
      <polygon points="605,629 620,620 642,633 636,644 625,646 610,643" fill="#b5e3b5" />
      {clearings.map((p) => <polygon key={p} points={p} fill="#f6f3ee" />)}
      {sheets.map((s) => (
        <g key={s.transform} transform={s.transform}>
          {s.water.map((p) => <polygon key={p} points={p} fill="#aadaff" />)}
          {s.streams.map(([p, w]) => <Lines key={p} lines={[p]} color="#aadaff" width={w} />)}
          {s.islands.map((p) => <polygon key={p} points={p} fill="#f3f3ea" />)}
          <Lines lines={s.local} color="#ffffff" width={2} />
        </g>
      ))}
      {sheets.map((s) => (
        <g key={s.transform} transform={s.transform}>
          <Lines lines={s.roads} color="#f5d271" width={5} />
        </g>
      ))}
      {sheets.map((s) => (
        <g key={s.transform} transform={s.transform}>
          <Lines lines={s.roads} color="#fff0a8" width={3} />
          <Lines lines={s.highways} color="#f6cd60" width={7} />
        </g>
      ))}
      {sheets.map((s) => (
        <g key={s.transform} transform={s.transform}>
          <Lines lines={s.highways} color="#ffe69c" width={4} />
        </g>
      ))}
      <g transform={south.transform}>
        <Lines lines={["23,998 330,973 565,973 840,958 1300,931 1559,930"]} color="#777b78" width={2} />
        <polyline
          points="998,950 985,1020 1005,1100 1005,1240 990,1281"
          fill="none"
          stroke="#8a98a5"
          strokeDasharray="5 4"
          vectorEffect="non-scaling-stroke"
        />
      </g>
    </svg>
  );
}

const pct = (x: number, y: number) => ({ left: `${(x / 779) * 100}%`, top: `${(y / 1268) * 100}%` });

type Place = { name: string; x: number; y: number; size?: "md" | "lg" | "xl"; edge?: boolean };

const places: Place[] = [
  { name: "Rawdon", x: 240, y: 137 },
  { name: "Joliette", x: 442, y: 145 },
  { name: "Sorel-Tracy", x: 652, y: 114, size: "md" },
  { name: "stérel", x: 0, y: 130, edge: true },
  { name: "Sainte-Julienne", x: 229, y: 196 },
  { name: "Saint-Jacques", x: 337, y: 234 },
  { name: "Saint-Lin-Laurentides", x: 207, y: 331 },
  { name: "L'Assomption", x: 446, y: 331 },
  { name: "nt-Jérôme", x: 0, y: 382, size: "md", edge: true },
  { name: "Repentigny", x: 427, y: 430, size: "md" },
  { name: "Terrebonne", x: 294, y: 465, size: "md" },
  { name: "Laval", x: 240, y: 549, size: "lg" },
  { name: "Boucherville", x: 429, y: 592, size: "md" },
  { name: "Mont-Saint-Hilaire", x: 606, y: 619 },
  { name: "Saint-Hyac", x: 690, y: 531, edge: true },
  { name: "Sai", x: 749, y: 618, edge: true },
  { name: "Montreal", x: 339, y: 650, size: "xl" },
  { name: "Brossard", x: 412, y: 732, size: "md" },
  { name: "Dorval", x: 214, y: 732 },
  { name: "euil-Dorion", x: -4, y: 779, edge: true },
  { name: "Ange-G", x: 708, y: 826, edge: true },
  { name: "Saint-Jean-sur-Richelieu", x: 554, y: 849, size: "lg" },
  { name: "Sabrevois", x: 572, y: 975 },
  { name: "Napierville", x: 451, y: 995 },
  { name: "Franklin", x: 94, y: 1151 },
  { name: "Champlain", x: 423, y: 1193 },
  { name: "Alburg", x: 524, y: 1205 },
  { name: "Highgate", x: 695, y: 1223 },
];

const placeSize = {
  sm: "text-[23px] text-[#5f6368]",
  md: "text-[24px] text-[#45484b]",
  lg: "text-[26px] text-[#3a3c3e]",
  xl: "text-[30px] text-[#333333]",
};

const shields = [
  { n: "125", x: 57, y: 41 },
  { n: "132", x: 615, y: 179 },
  { n: "40", x: 501, y: 267, blue: true },
  { n: "116", x: 481, y: 669 },
  { n: "112", x: 688, y: 744 },
  { n: "10", x: 465, y: 769, blue: true },
  { n: "30", x: 286, y: 826, blue: true },
  { n: "201", x: 76, y: 1087 },
  { n: "209", x: 136, y: 1111 },
  { n: "202", x: 208, y: 1134 },
  { n: "15", x: 411, y: 1092, blue: true },
  { n: "223", x: 481, y: 1137 },
  { n: "235", x: 724, y: 1118 },
];

const towns = [
  { x: 653, y: 137 },
  { x: 444, y: 165 },
  { x: 38, y: 405 },
  { x: 294, y: 489 },
  { x: 240, y: 575 },
  { x: 761, y: 551 },
  { x: 556, y: 875 },
];

const halo =
  "[text-shadow:0_0_2px_#fff,2px_0_2px_#fff,-2px_0_2px_#fff,0_2px_2px_#fff,0_-2px_2px_#fff,2px_2px_2px_#fff,-2px_-2px_2px_#fff,2px_-2px_2px_#fff,-2px_2px_2px_#fff]";

function MapView() {
  return (
    <div className="relative flex-1 overflow-hidden">
      <Terrain />
      {shields.map((s) => (
        <span
          key={s.n}
          style={pct(s.x, s.y)}
          className={`absolute flex h-[27px] -translate-x-1/2 -translate-y-1/2 items-center justify-center pb-px text-[17px] leading-none font-bold text-white [clip-path:polygon(0_6%,4%_0,96%_0,100%_6%,100%_84%,50%_100%,0_84%)] ${
            s.blue ? "w-7 bg-[#3a78c9]" : "w-9 bg-[#6a9f42]"
          }`}
        >
          {s.n}
        </span>
      ))}
      {towns.map((t) => (
        <span
          key={t.x}
          style={pct(t.x, t.y)}
          className="absolute h-[9px] w-[9px] -translate-x-1/2 -translate-y-1/2 rounded-full border-2 border-[#5a5a5a] bg-[#eeeeee]"
        />
      ))}
      <span
        style={pct(340, 679)}
        className="absolute h-[13px] w-[13px] -translate-x-1/2 -translate-y-1/2 rounded-full border-2 border-black bg-[#eeeeee]"
      />
      <span
        style={pct(152, 724)}
        className="absolute flex h-8 w-8 -translate-x-1/2 -translate-y-1/2 items-center justify-center rounded-[3px] bg-[#1a9463] text-white"
      >
        <Icon box="0 0 28 28" className="h-7 w-7">
          <path d="M14 1l2.500 4.500L19 4l-.8 7 3.300-3.300.8 2.300 4-.7-1.300 4 2 1.500-6.500 5.200.8 2.500-6.300-.7.200 5h-2.400l.2-5-6.300.7.8-2.500L1 14.800l2-1.500-1.300-4 4 .7.800-2.300L9.800 11 9 4l2.500 1.500z" />
        </Icon>
      </span>
      {places.map((p) => (
        <span
          key={p.name}
          style={pct(p.x, p.y)}
          className={`absolute -translate-y-1/2 leading-[30px] whitespace-nowrap ${halo} ${
            p.edge ? "" : "-translate-x-1/2"
          } ${placeSize[p.size ?? "sm"]}`}
        >
          {p.name}
        </span>
      ))}
      <svg
        viewBox="0 0 50 82"
        style={pct(344, 670)}
        className="absolute h-[82px] w-[50px] -translate-x-1/2 -translate-y-full"
        role="img"
        aria-label="Marker on Montreal"
      >
        <path
          d="M25 81C24 67 20 60 12 49 6 41 1 34 1 25a24 24 0 0 1 48 0c0 9-5 16-11 24-8 11-12 18-13 32z"
          fill="#ea4335"
          stroke="#ffffff"
          strokeWidth="1"
        />
        <circle cx="25" cy="25" r="8.500" fill="#811411" />
      </svg>
      <span
        aria-label="Google"
        className={`absolute bottom-[13px] left-[13px] text-[34px] leading-none font-medium [font-family:Lato,sans-serif] ${halo}`}
      >
        <span className="text-[#4285f4]">G</span>
        <span className="text-[#ea4335]">o</span>
        <span className="text-[#fbbc05]">o</span>
        <span className="text-[#4285f4]">g</span>
        <span className="text-[#34a853]">l</span>
        <span className="text-[#ea4335]">e</span>
      </span>
    </div>
  );
}

function MapScreen() {
  return (
    <section className="mt-[7px] mr-[5px] ml-[49px] flex basis-0 grow-[779] flex-col bg-[#fafafa]">
      <StatusBar time="9:21" tight className="h-[46px] pr-7 pl-[27px]" />
      <MapView />
      <NavBar className="h-[86px] pt-1" />
    </section>
  );
}

export default function App() {
  return (
    <main className="flex min-h-screen items-stretch overflow-hidden bg-white [font-family:Roboto,'Noto_Sans',sans-serif]">
      <LoginScreen />
      <RegisterScreen />
      <AddCityScreen />
      <CityListScreen />
      <MapScreen />
    </main>
  );
}
